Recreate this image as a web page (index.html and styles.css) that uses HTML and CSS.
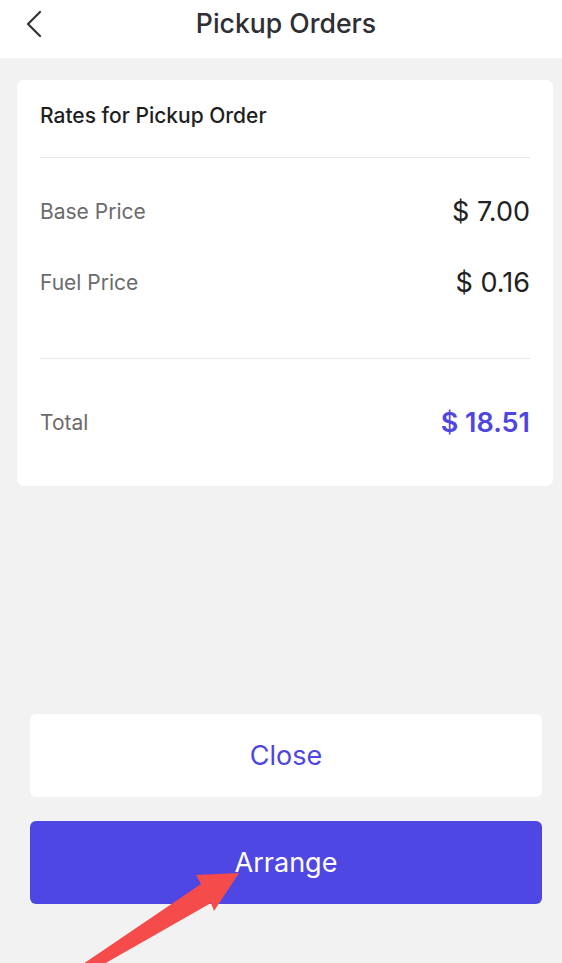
FILE: index.html
```html
<!DOCTYPE html>
<html>
<head>
<meta charset="utf-8">
<link rel="stylesheet" href="styles.css">
</head>
<body>
<div class="page">
  <header class="topbar">
    <span class="back">
      <svg width="18" height="28" viewBox="0 0 18 28"><path d="M15 2 L3 14 L15 26" fill="none" stroke="#333" stroke-width="2.2" stroke-linecap="round" stroke-linejoin="round"/></svg>
    </span>
    <h1 class="title">Pickup Orders</h1>
  </header>
  <main class="content">
    <section class="card">
      <h2 class="card-title">Rates for Pickup Order</h2>
      <div class="divider"></div>
      <div class="row row-base"><span class="label">Base Price</span><span class="value">$ 7.00</span></div>
      <div class="row row-fuel"><span class="label">Fuel Price</span><span class="value">$ 0.16</span></div>
      <div class="divider divider-2"></div>
      <div class="row row-total"><span class="label">Total</span><span class="value total">$ 18.51</span></div>
    </section>
  </main>
  <footer class="actions">
    <button class="btn btn-close">Close</button>
    <button class="btn btn-arrange">Arrange</button>
  </footer>
  <svg class="arrow" width="562" height="963" viewBox="0 0 562 963">
    <polygon points="83,964 201,884 196,875 239,873 214,911 211,903 104,964" fill="#f54b4a"/>
  </svg>
</div>
</body>
</html>
```
FILE: styles.css
```css
* { box-sizing: border-box; }
html, body { margin: 0; padding: 0; }
body {
  background: #f2f2f2;
  font-family: Inter, "Noto Sans", "Liberation Sans", sans-serif;
  overflow: hidden;
}
.page {
  position: relative;
  min-height: 963px;
  height: 963px;
  display: flex;
  flex-direction: column;
}
.topbar {
  height: 58px;
  background: #fff;
  display: flex;
  align-items: center;
  justify-content: center;
  position: relative;
}
.back {
  position: absolute;
  left: 25px;
  top: 10px;
  width: 18px;
  height: 28px;
  display: block;
}
.back svg { display: block; }
.title {
  margin: 0;
  font-size: 26.6px;
  font-weight: 500;
  color: #2f2f33;
  line-height: 30px;
  margin-top: -12px;
  padding-left: 10px;
}
.content {
  padding: 22px 9px 0 17px;
}
.card {
  background: #fff;
  border-radius: 7px;
  padding: 22px 23px 46px 23px;
}
.card-title {
  margin: 0;
  font-size: 21px;
  font-weight: 500;
  line-height: 28px;
  color: #1f1f1f;
}
.divider {
  height: 1px;
  background: #e6e6e6;
  margin-top: 27px;
}
.divider-2 { margin-top: 58px; }
.row {
  display: flex;
  justify-content: space-between;
  align-items: center;
  height: 36px;
}
.row-base { margin-top: 35px; }
.row-fuel { margin-top: 35px; }
.row-total { margin-top: 45px; }
.label {
  font-size: 21px;
  color: #6b6b6b;
}
.value {
  font-size: 27px;
  color: #222;
}
.value.total {
  color: #4f46e1;
  font-weight: 600;
}
.actions {
  margin-top: auto;
  padding: 0 20px 59px 30px;
  display: flex;
  flex-direction: column;
  gap: 24px;
}
.btn {
  height: 83px;
  border: none;
  border-radius: 6px;
  font-family: Inter, "Noto Sans", "Liberation Sans", sans-serif;
  font-size: 27px;
  font-weight: 400;
  cursor: pointer;
}
.btn-close {
  background: #fff;
  color: #4f46e1;
}
.btn-arrange {
  background: #4f47e3;
  color: #fff;
}
.arrow {
  position: absolute;
  left: 0;
  top: 0;
  pointer-events: none;
}
```
